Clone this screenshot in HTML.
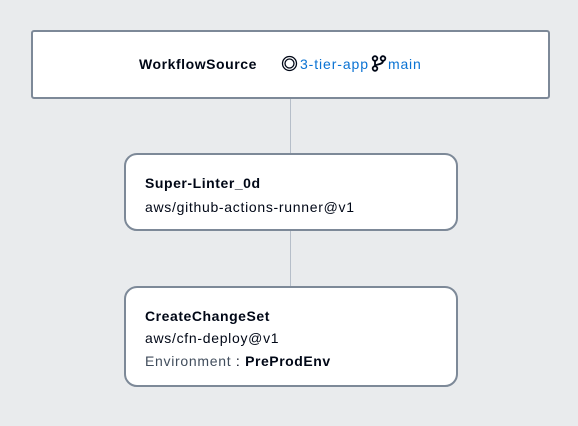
<!DOCTYPE html><html><head><style>
body{margin:0;width:578px;height:426px;background:#e9ebed;font-family:"Liberation Sans",sans-serif;position:relative;overflow:hidden;color:#000716}
.b{position:absolute;background:#fff;border:2px solid #7d8998;box-sizing:border-box}
.t{position:absolute;font-size:14px;white-space:nowrap;line-height:16px;letter-spacing:0.7px}
.t.bd,.t b{font-weight:bold;letter-spacing:0.55px}
.line{position:absolute;left:290px;width:1px;background:#b6bec9}
</style></head><body>
<div class="line" style="top:98px;height:56px"></div>
<div class="line" style="top:230px;height:57px"></div>
<div class="b" style="left:31px;top:30px;width:519px;height:69px;border-radius:3px"></div>
<div class="t bd" style="left:139px;top:56px">WorkflowSource</div>
<svg style="position:absolute;left:281px;top:55px" width="17" height="17" viewBox="0 0 17 17"><circle cx="8.5" cy="8.5" r="7" fill="none" stroke="#000716" stroke-width="1.3"/><circle cx="8.5" cy="8.5" r="4.5" fill="none" stroke="#000716" stroke-width="1.3"/></svg>
<div class="t" style="left:300px;top:56px;color:#0972d3;letter-spacing:0.9px">3-tier-app</div>
<svg style="position:absolute;left:371px;top:55px" width="16" height="17" viewBox="0 0 16 17"><circle cx="4" cy="3.5" r="2.3" fill="none" stroke="#000716" stroke-width="1.8"/><circle cx="4" cy="13.5" r="2.3" fill="none" stroke="#000716" stroke-width="1.8"/><circle cx="12" cy="3.5" r="2.3" fill="none" stroke="#000716" stroke-width="1.8"/><path d="M4 6v5M12 6c0 4-8 3-8 5" fill="none" stroke="#000716" stroke-width="1.8"/></svg>
<div class="t" style="left:388px;top:56px;color:#0972d3;letter-spacing:0.8px">main</div>
<div class="b" style="left:124px;top:153px;width:334px;height:78px;border-radius:13px"></div>
<div class="t bd" style="left:145px;top:175px">Super-Linter_0d</div>
<div class="t" style="left:145px;top:199px">aws/github-actions-runner@v1</div>
<div class="b" style="left:124px;top:286px;width:334px;height:101px;border-radius:13px"></div>
<div class="t bd" style="left:145px;top:308px">CreateChangeSet</div>
<div class="t" style="left:145px;top:330px">aws/cfn-deploy@v1</div>
<div class="t" style="left:145px;top:353px"><span style="color:#414d5c">Environment</span>&nbsp;: <b>PreProdEnv</b></div>
</body></html>
